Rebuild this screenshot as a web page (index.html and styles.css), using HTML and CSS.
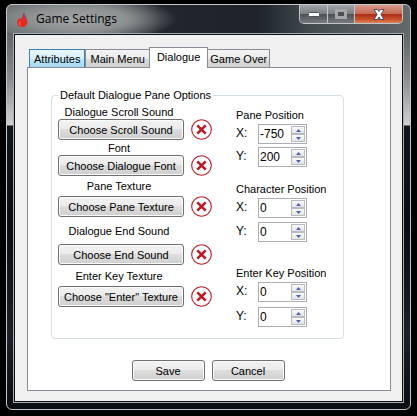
FILE: index.html
```html
<!DOCTYPE html>
<html lang="en">
<head>
<meta charset="utf-8">
<meta name="viewport" content="width=device-width, initial-scale=1">
<title>Game Settings</title>
<link rel="stylesheet" href="styles.css">
</head>
<body>
<svg class="defs" aria-hidden="true">
  <symbol id="clear" viewBox="0 0 21 21">
    <circle cx="10.5" cy="10.5" r="9.8" fill="#fff" stroke="#be1622" stroke-width="1.1"/>
    <path d="M6.300 6.300L14.700 14.700M14.700 6.300L6.300 14.700" stroke="#be1622" stroke-width="2.5"/>
  </symbol>
  <symbol id="up" viewBox="0 0 5 3"><path d="M0 3L2.5 0L5 3z" fill="#4a62b4"/></symbol>
  <symbol id="down" viewBox="0 0 5 3"><path d="M0 0L2.5 3L5 0z" fill="#4a62b4"/></symbol>
</svg>
<main class="window">
  <header class="titlebar">
    <svg class="flame" viewBox="0 0 11 15" aria-hidden="true">
      <path d="M6 0C6.5 3 10.800 6 10.500 10C10.300 13 8 15 5.200 15C2 15 0 13 .3 10C.5 8 1.500 7 2.500 5.500C2.500 7 3 7.500 3.500 7.500C4.500 6 6.500 3 6 0z" fill="#e62a20"/>
      <path d="M7 1C7 3 9.500 5 9.300 8" fill="none" stroke="#5966b0" stroke-width="1.300"/>
      <path d="M3.500 9.500C2 11 2.500 13 4 13.500" fill="none" stroke="#ff675b"/>
    </svg>
    <h1>Game Settings</h1>
    <div class="controls">
      <button type="button" aria-label="Minimize"><svg width="12" height="5"><rect x=".5" y=".5" width="11" height="4" rx="1" fill="#fff" stroke="#4c5258"/></svg></button>
      <button type="button" aria-label="Maximize"><svg width="12" height="10"><rect x="1.500" y="1.500" width="9" height="7" fill="#4b4f52" stroke="#a4a6a8" stroke-width="3"/></svg></button>
      <button type="button" class="close" aria-label="Close"><svg width="12" height="11" viewBox="0 0 12 11"><path d="M1 .5H4.500L6 2.500L7.500 .5H11L8 5.500L11 10.500H7.500L6 8L4.500 10.500H1L4 5.500z" fill="#fff" stroke="#474b5c"/></svg></button>
    </div>
  </header>
  <form class="client">
    <div class="tabs" role="tablist">
      <button type="button" role="tab" class="hot">Attributes</button>
      <button type="button" role="tab">Main Menu</button>
      <button type="button" role="tab" class="active" aria-selected="true">Dialogue</button>
      <button type="button" role="tab" class="last">Game Over</button>
    </div>
    <div class="panel" role="tabpanel">
      <fieldset class="options">
        <legend>Default Dialogue Pane Options</legend>
        <div class="assets">
          <label for="scroll">Dialogue Scroll Sound</label>
          <button type="button" class="btn" id="scroll">Choose Scroll Sound</button>
          <button type="button" class="clear" aria-label="Clear scroll sound"><svg><use href="#clear"/></svg></button>
          <label for="font">Font</label>
          <button type="button" class="btn" id="font">Choose Dialogue Font</button>
          <button type="button" class="clear" aria-label="Clear font"><svg><use href="#clear"/></svg></button>
          <label for="pane">Pane Texture</label>
          <button type="button" class="btn" id="pane">Choose Pane Texture</button>
          <button type="button" class="clear" aria-label="Clear pane texture"><svg><use href="#clear"/></svg></button>
          <label for="end">Dialogue End Sound</label>
          <button type="button" class="btn" id="end">Choose End Sound</button>
          <button type="button" class="clear" aria-label="Clear end sound"><svg><use href="#clear"/></svg></button>
          <label for="enter">Enter Key Texture</label>
          <button type="button" class="btn" id="enter">Choose "Enter" Texture</button>
          <button type="button" class="clear" aria-label="Clear enter texture"><svg><use href="#clear"/></svg></button>
        </div>
        <div class="positions">
          <h2>Pane Position</h2>
          <label for="px">X:</label>
          <div class="spin"><input id="px" type="number" value="-750"><div class="steps"><button type="button" aria-label="Increase"><svg><use href="#up"/></svg></button><button type="button" aria-label="Decrease"><svg><use href="#down"/></svg></button></div></div>
          <label for="py">Y:</label>
          <div class="spin"><input id="py" type="number" value="200"><div class="steps"><button type="button" aria-label="Increase"><svg><use href="#up"/></svg></button><button type="button" aria-label="Decrease"><svg><use href="#down"/></svg></button></div></div>
          <h2>Character Position</h2>
          <label for="cx">X:</label>
          <div class="spin"><input id="cx" type="number" value="0"><div class="steps"><button type="button" aria-label="Increase"><svg><use href="#up"/></svg></button><button type="button" aria-label="Decrease"><svg><use href="#down"/></svg></button></div></div>
          <label for="cy">Y:</label>
          <div class="spin"><input id="cy" type="number" value="0"><div class="steps"><button type="button" aria-label="Increase"><svg><use href="#up"/></svg></button><button type="button" aria-label="Decrease"><svg><use href="#down"/></svg></button></div></div>
          <h2>Enter Key Position</h2>
          <label for="ex">X:</label>
          <div class="spin"><input id="ex" type="number" value="0"><div class="steps"><button type="button" aria-label="Increase"><svg><use href="#up"/></svg></button><button type="button" aria-label="Decrease"><svg><use href="#down"/></svg></button></div></div>
          <label for="ey">Y:</label>
          <div class="spin"><input id="ey" type="number" value="0"><div class="steps"><button type="button" aria-label="Increase"><svg><use href="#up"/></svg></button><button type="button" aria-label="Decrease"><svg><use href="#down"/></svg></button></div></div>
        </div>
      </fieldset>
      <div class="actions">
        <button type="submit" class="btn">Save</button>
        <button type="button" class="btn">Cancel</button>
      </div>
    </div>
  </form>
</main>
</body>
</html>
```
FILE: styles.css
```css
* { box-sizing: border-box; }

body {
  margin: 0;
  padding: 4px 6px 6px;
  background: #000;
  color: #000;
  font: 11px/14px "Liberation Sans", Arial, sans-serif;
}

button, input { font: inherit; color: inherit; margin: 0; padding: 0; }
button { display: flex; align-items: center; justify-content: center; white-space: nowrap; }
h1, h2 { margin: 0; font-weight: normal; }
.defs { display: none; }

.window {
  border: 1px solid #c4c8ca;
  border-radius: 6px;
  padding: 0 7px 7px;
  background:
    radial-gradient(ellipse 100px 24px at 70px 14px, #a2a4a5 0, #8d9091 50%, transparent 100%) no-repeat 0 0 / 100% 28px,
    linear-gradient(90deg, #63686a 0, #555b5e 24%, #20262b 38%, #1d2328 62%, #454c50 76%, #63686b 100%) no-repeat 0 0 / 100% 29px,
    linear-gradient(#62676a 29px, #85898b 70px, #cfd0d1 120px, #10171b 121px, #080d11 220px, #1b2126 330px, #080d11 100%);
}

.titlebar { display: flex; align-items: flex-start; height: 29px; padding-left: 3px; }
.flame { width: 11px; height: 15px; margin-top: 7px; }
h1 { flex: 1; margin: 6px 0 0 8px; font: 12px/16px "Open Sans", sans-serif; }

.controls {
  display: grid;
  grid-template-columns: 28px 27px 47px;
  border: 1px solid #c2c6c8;
  border-top: 0;
  border-radius: 0 0 5px 5px;
  overflow: hidden;
}
.controls button {
  height: 18px;
  border: 0;
  border-right: 1px solid #c2c6c8;
  background: linear-gradient(#a2a6a8 0, #7b8083 48%, #4a5054 50%, #767c80 100%);
}
.controls .close {
  border: 0;
  background: linear-gradient(#d99a8b 0, #c56b57 48%, #a92b16 50%, #c9502a 80%, #df865b 100%);
}

.client {
  padding: 12px 11px 10px 12px;
  background: #f0f0f0;
  border: 1px solid #0c1013;
  outline: 1px solid #a9adaf;
}

.tabs { display: flex; align-items: flex-end; padding-left: 2px; height: 20px; }
.tabs button {
  height: 18px;
  padding: 0 4px;
  border: 1px solid #898c95;
  border-width: 1px 0 0 1px;
  background: linear-gradient(#f3f3f3 0, #ebebeb 50%, #dcdcdc 51%, #d0d0d0 100%);
}
.tabs .hot {
  border-color: #3c7fb1;
  border-right-width: 1px;
  background: linear-gradient(#e9f6fd 0, #d8effb 50%, #bde6fd 51%, #a5d9f4 100%);
}
.tabs .active {
  position: relative;
  height: 21px;
  margin: 0 -1px -1px 0;
  padding: 0 7px 2px;
  border-right-width: 1px;
  background: #fff;
}
.tabs .last { padding: 0 2px; border-right-width: 1px; }

.panel { padding: 20px 46px 9px 23px; border: 1px solid #898c95; background: #fff; }

.options {
  display: flex;
  justify-content: space-between;
  margin: 0;
  min-width: 0;
  padding: 2px 21px 11px 6px;
  border: 1px solid #d5dfe5;
  border-radius: 4px;
}
legend { margin-left: 0; padding: 0 2px; }

.assets {
  display: grid;
  grid-template-columns: 126px 21px;
  grid-template-rows: 15px 21px 15px 21px 20px 21px 27px 21px 21px 21px;
  column-gap: 7px;
  align-items: center;
  white-space: nowrap;
}
.assets label { grid-column: 1 / -1; padding-right: 32px; text-align: center; }

.btn {
  height: 21px;
  border: 1px solid #707070;
  border-radius: 3px;
  box-shadow: inset 0 0 0 1px #fbfbfb;
  background: linear-gradient(#f2f2f2 0, #ebebeb 48%, #dddddd 50%, #cfcfcf 100%);
}
.clear { width: 21px; height: 21px; border: 0; background: none; }
.clear svg { width: 21px; height: 21px; }

.positions {
  display: grid;
  grid-template-columns: 22px 49px;
  grid-template-rows: 20px 23px 20px 31px 24px 20px 40px 25px 20px;
  width: 86px;
  white-space: nowrap;
}
.positions h2 { grid-column: 1 / -1; align-self: end; font-size: inherit; padding-bottom: 2px; }
.positions label { padding-top: 2px; font-size: 12px; }

.spin { display: flex; height: 20px; padding: 1px; border: 1px solid #abadb3; background: #fff; }
.spin input {
  flex: 1;
  min-width: 0;
  height: 15px;
  border: 0;
  outline: 0;
  background: none;
  font-size: 12px;
  appearance: textfield;
}
.spin input::-webkit-inner-spin-button { appearance: none; margin: 0; }
.steps { display: grid; grid-template-rows: 8px 8px; width: 14px; }
.steps button { border: 1px solid #b9bbc2; background: linear-gradient(#fafafa, #e4e4e6); }
.steps svg { width: 5px; height: 3px; }

.actions { display: flex; justify-content: center; gap: 7px; margin: 21px -21px 0 0; }
.actions .btn { width: 73px; }
```
